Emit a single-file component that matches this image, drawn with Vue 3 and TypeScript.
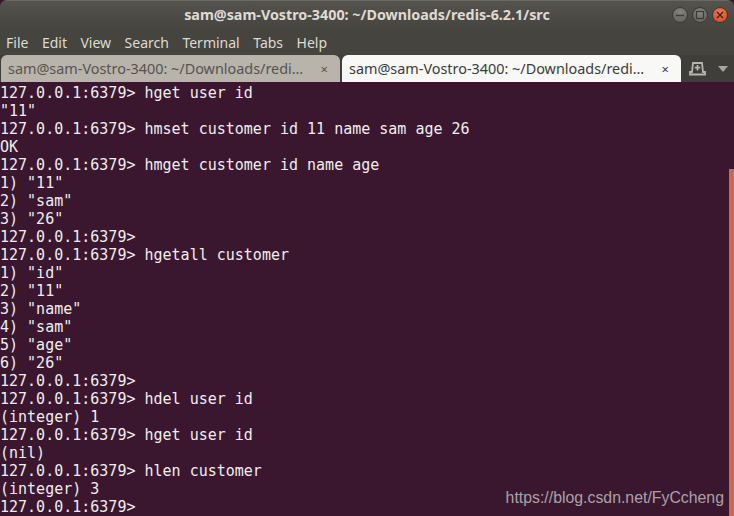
<script setup lang="ts">
const lines: string[] = [
  '127.0.0.1:6379> hget user id',
  '"11"',
  '127.0.0.1:6379> hmset customer id 11 name sam age 26',
  'OK',
  '127.0.0.1:6379> hmget customer id name age',
  '1) "11"',
  '2) "sam"',
  '3) "26"',
  '127.0.0.1:6379>',
  '127.0.0.1:6379> hgetall customer',
  '1) "id"',
  '2) "11"',
  '3) "name"',
  '4) "sam"',
  '5) "age"',
  '6) "26"',
  '127.0.0.1:6379>',
  '127.0.0.1:6379> hdel user id',
  '(integer) 1',
  '127.0.0.1:6379> hget user id',
  '(nil)',
  '127.0.0.1:6379> hlen customer',
  '(integer) 3',
  '127.0.0.1:6379>',
]
const menus: string[] = ['File', 'Edit', 'View', 'Search', 'Terminal', 'Tabs', 'Help']
const tabTitle = 'sam@sam-Vostro-3400: ~/Downloads/redi…'
</script>

<template>
  <div class="window">
    <header class="titlebar">
      <span class="title">sam@sam-Vostro-3400: ~/Downloads/redis-6.2.1/src</span>
      <div class="controls">
        <span class="btn">
          <svg width="12" height="12" viewBox="0 0 12 12"><path d="M2 6.5h8" stroke="#3a3a36" stroke-width="1.4" /></svg>
        </span>
        <span class="btn">
          <svg width="12" height="12" viewBox="0 0 12 12"><rect x="2.5" y="2.5" width="7" height="7" fill="none" stroke="#3a3a36" stroke-width="1.2" /></svg>
        </span>
        <span class="btn close">
          <svg width="12" height="12" viewBox="0 0 12 12"><path d="M3 3l6 6M9 3l-6 6" stroke="#3c2418" stroke-width="1.4" /></svg>
        </span>
      </div>
    </header>
    <nav class="menubar">
      <span v-for="m in menus" :key="m">{{ m }}</span>
    </nav>
    <div class="tabbar">
      <div class="tab inactive">
        <span class="tab-label">{{ tabTitle }}</span>
        <span class="tab-x">×</span>
      </div>
      <div class="tab active">
        <span class="tab-label">{{ tabTitle }}</span>
        <span class="tab-x">×</span>
      </div>
      <div class="tab-tools">
        <svg width="17" height="15" viewBox="0 0 17 15">
          <path d="M4 2h9l1 9h2v2.5H1V11h2z" fill="none" stroke="#b8b5ae" stroke-width="1.8" />
          <path d="M8.5 4v5.5M5.8 6.7h5.4" stroke="#b8b5ae" stroke-width="1.8" />
        </svg>
        <svg class="caret" width="10" height="6" viewBox="0 0 10 6"><path d="M0 0h10L5 6z" fill="#a8a59f" /></svg>
      </div>
    </div>
    <main class="terminal">
      <pre class="output"><template v-for="(l, i) in lines" :key="i">{{ l }}
</template></pre>
      <span class="watermark">https://blog.csdn.net/FyCcheng</span>
      <span class="scroll"></span>
    </main>
  </div>
</template>

<style>
html, body { margin: 0; background: #3b172f; }
</style>

<style scoped>
.window {
  width: 734px;
  height: 516px;
  display: flex;
  flex-direction: column;
  overflow: hidden;
  background: #3c3b37;
  border-radius: 7px 7px 0 0;
  font-family: "Noto Sans", sans-serif;
}
.titlebar {
  height: 30px;
  flex: none;
  position: relative;
  display: flex;
  align-items: center;
  justify-content: center;
  background: linear-gradient(#55534d, #45443f);
  border-top: 1px solid #6a6862;
  box-sizing: border-box;
  padding-bottom: 2px;
}
.title {
  color: #dfdbd2;
  font-size: 14.3px;
  font-weight: 700;
  white-space: nowrap;
}
.controls {
  position: absolute;
  right: 6px;
  top: 6px;
  display: flex;
  gap: 4px;
}
.btn {
  width: 16px;
  height: 16px;
  box-sizing: border-box;
  border-radius: 50%;
  background: radial-gradient(circle at 50% 30%, #85837c, #5f5d57);
  border: 0.5px solid #3b3a36;
  display: flex;
  align-items: center;
  justify-content: center;
}
.btn.close { background: radial-gradient(circle at 50% 30%, #f0764a, #d9491c); }
.menubar {
  height: 25px;
  flex: none;
  display: flex;
  align-items: center;
  gap: 13.5px;
  padding: 0 6px;
  background: #45443f;
  color: #dfdbd2;
  font-size: 14px;
}
.tabbar {
  height: 27px;
  flex: none;
  display: flex;
  align-items: flex-end;
  gap: 2px;
  padding-left: 1px;
  background: #3f3e3a;
}
.tab {
  width: 339px;
  height: 27px;
  box-sizing: border-box;
  border-radius: 6px 6px 0 0;
  display: flex;
  align-items: center;
  justify-content: space-between;
  padding: 0 12px 0 7px;
  font-size: 14.4px;
  white-space: nowrap;
}
.tab.inactive { background: #b8b4ac; color: #55534e; }
.tab.active { background: #f8f8f7; color: #3c3b37; }
.tab-x { font-size: 13px; }
.tab-tools {
  flex: 1;
  height: 27px;
  display: flex;
  align-items: center;
  padding-left: 6px;
  gap: 12px;
}
.terminal {
  flex: 1;
  position: relative;
  background: #3b172f;
  overflow: hidden;
  padding-top: 2px;
}
.output {
  margin: 0;
  padding: 0;
  color: #eeeeec;
  font-family: "DejaVu Sans Mono", monospace;
  font-size: 15px;
  line-height: 18px;
}
.watermark {
  position: absolute;
  right: 10px;
  top: 407px;
  color: #a9a2a8;
  font-family: "Liberation Sans", sans-serif;
  font-size: 15.85px;
  white-space: nowrap;
}
.scroll {
  position: absolute;
  right: 0;
  top: 87px;
  bottom: 0;
  width: 5px;
  background: #d0694a;
}
</style>
